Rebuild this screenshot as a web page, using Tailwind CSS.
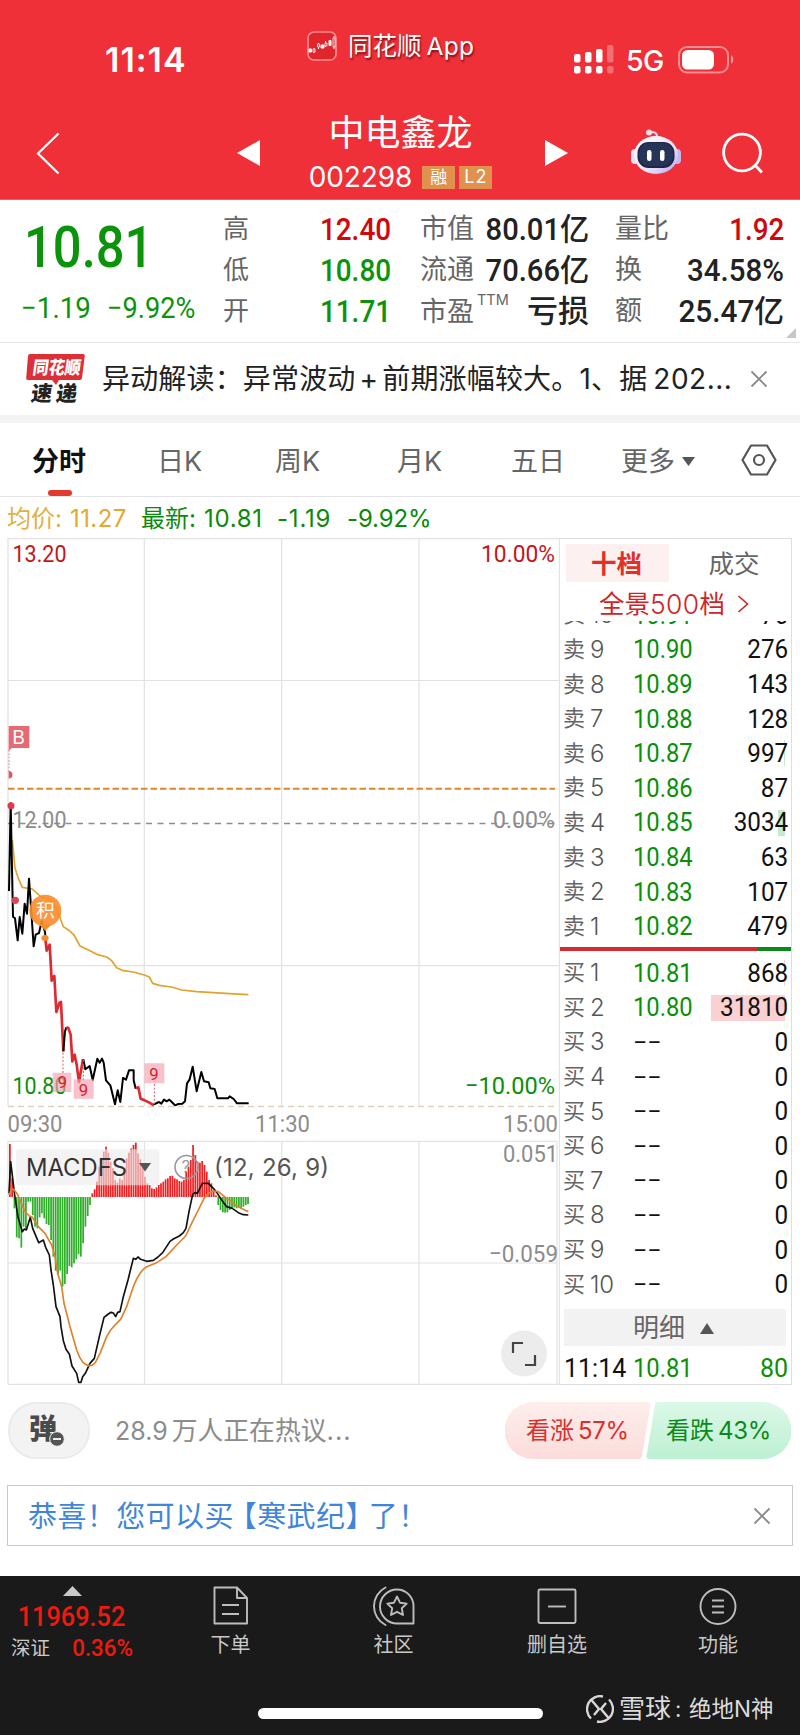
<!DOCTYPE html>
<html lang="zh-CN">
<head>
    <meta charset="UTF-8">
    <meta name="viewport" content="width=device-width, initial-scale=1.0">
    <title>中电鑫龙 002298</title>
    <script src="https://cdn.jsdelivr.net/npm/@tailwindcss/browser@4"></script>
</head>
<body class="bg-white">
<div class="w-[800px] h-[1735px] overflow-hidden flex flex-col bg-white leading-none whitespace-nowrap font-[Inter,'Noto_Sans_CJK_SC',sans-serif]">

    <!-- Header -->
    <header class="h-[200px] shrink-0 bg-[#ef3038] text-white border-b border-[#d9686c]">
        <!-- Status bar -->
        <div class="h-[100px] flex items-start">
            <div class="w-[307px] pl-[105px] pt-[43px] text-[34px] font-semibold tracking-[1px]">11:14</div>
            <div class="w-[267px] pt-[31px] flex gap-[11px]">
                <svg class="w-[30px] h-[30px]" viewBox="0 0 30 30" fill="none" stroke="#fff">
                    <rect x="1" y="1" width="28" height="28" rx="6" fill="#e0262c" stroke="#ff8f92" stroke-width="1.6"/>
                    <path d="M7 17v5M11.5 12v6M18.5 10v6M27 5v13" stroke-width="1"/>
                    <path d="M2 18h2.500v3H2zM14 14h3v3h-3zM22 9.500h2v5h-2z" fill="#fff" stroke-width="1"/>
                    <path d="M6 18h2v3H6zM10.500 13h2v3h-2zM18 12h2v3h-2zM26 7h2v9h-2z" fill="#e0262c" stroke-width=".8"/>
                </svg>
                <div class="h-[30px] flex items-center pt-px text-[24.5px] [text-shadow:1px_2px_2px_rgba(90,0,0,0.7)]">同花顺<span class="ml-[5px] tracking-[0.3px]">App</span></div>
            </div>
            <div class="pt-[45px] flex items-start">
                <svg class="w-[40px] h-[29px]" viewBox="0 0 40 29" fill="#fff">
                    <rect x="0" y="9" width="6.500" height="8.500" rx="2"/><rect x="11" y="7" width="6.500" height="10.500" rx="2"/><rect x="22" y="4" width="6.500" height="13.500" rx="2"/><rect x="33" y="0" width="6.500" height="17.500" rx="2" opacity=".3"/>
                    <rect x="0" y="21" width="6.500" height="7.500" rx="2"/><rect x="11" y="21" width="6.500" height="7.500" rx="2"/><rect x="22" y="21" width="6.500" height="7.500" rx="2"/><rect x="33" y="21" width="6.500" height="7.500" rx="2" opacity=".3"/>
                </svg>
                <div class="w-[64px] pl-[12px] pt-[2px] text-[28.5px] tracking-[-0.6px] font-medium">5G</div>
                <svg class="w-[56px] h-[29px]" viewBox="0 0 56 29">
                    <rect x="1" y="2" width="49" height="25.500" rx="8" fill="none" stroke="#fff" stroke-opacity=".45" stroke-width="2"/>
                    <rect x="4" y="5" width="32" height="19.500" rx="5.500" fill="#fff"/>
                    <path d="M53 10v9c3-2 3-7 0-9z" fill="#fff" opacity=".5"/>
                </svg>
            </div>
        </div>
        <!-- Stock title -->
        <div class="h-[99px] flex items-start">
            <svg class="mt-[32px] ml-[36px] w-[24px] h-[42px]" viewBox="0 0 24 42" fill="none" stroke="#fff" stroke-width="2.200"><path d="M22.500 1.500 2 21.500l20.500 20"/></svg>
            <svg class="mt-[40px] ml-[177px] w-[23px] h-[26px]" viewBox="0 0 23 26" fill="#fff"><path d="M0 13 23 0v26z"/></svg>
            <div class="w-[285px] flex flex-col items-center pr-[4px]">
                <div class="pt-[15px] text-[36px] h-[62px]">中电鑫龙</div>
                <div class="flex items-center h-[30px]">
                    <span class="text-[28px] tracking-[-0.1px] mr-[10px]">002298</span>
                    <span class="w-[33px] h-[23px] mr-[4px] bg-[#e0914d] text-[17px] flex items-center justify-center">融</span>
                    <span class="w-[33px] h-[23px] bg-[#e0914d] text-[18px] tracking-[1px] flex items-center justify-center">L2</span>
                </div>
            </div>
            <svg class="mt-[40px] w-[23px] h-[26px]" viewBox="0 0 23 26" fill="#fff"><path d="M23 13 0 0v26z"/></svg>
            <svg class="mt-[28px] ml-[63px] w-[50px] h-[48px]" viewBox="0 0 50 48">
                <defs><linearGradient id="robot" x1="0" y1="0" x2="1" y2="1"><stop offset="0" stop-color="#fff"/><stop offset=".6" stop-color="#e9e2fb"/><stop offset="1" stop-color="#b3a3ea"/></linearGradient></defs>
                <path d="M26 9c0-5-3-5-7-5" fill="none" stroke="#f4dff0" stroke-width="2"/><circle cx="18" cy="4.500" r="3" fill="#fbdde6"/>
                <rect x="0" y="21" width="8" height="15" rx="4" fill="#e6ddfa"/><rect x="42" y="21" width="8" height="15" rx="4" fill="#c6b7ee"/>
                <ellipse cx="25" cy="27" rx="22" ry="19" fill="url(#robot)"/>
                <rect x="6.500" y="14" width="37" height="26" rx="11" fill="#1d2748"/><rect x="8" y="15" width="34" height="23" rx="10" fill="#2b3a5e" opacity=".7"/>
                <rect x="16" y="22" width="4.500" height="11" rx="2.200" fill="#fff"/><rect x="29" y="22" width="4.500" height="11" rx="2.200" fill="#fff"/>
            </svg>
            <svg class="mt-[32px] ml-[41px] w-[42px] h-[42px]" viewBox="0 0 42 42" fill="none" stroke="#fff" stroke-width="2.800"><circle cx="20" cy="20.500" r="18.400"/><path d="m33 33 7 7.500"/></svg>
        </div>
    </header>

    <!-- Quote summary -->
    <section class="h-[143px] shrink-0 border-b border-[#e6e6e6] flex relative text-[#222] font-['Roboto','Noto_Sans_CJK_SC',sans-serif]">
        <div class="w-[223px] text-[#0b930b]">
            <div class="h-[94px] pl-[24px] pt-[19px] text-[57px] leading-[57px] font-medium"><span class="inline-block origin-left scale-x-[0.89]">10.81</span></div>
            <div class="flex pl-[21px] text-[29.5px]"><span class="w-[86px]"><span class="inline-block origin-left scale-x-[0.94]">−1.19</span></span><span class="inline-block origin-left scale-x-[0.92]">−9.92%</span></div>
        </div>
        <div class="w-[168px] pt-[8.500px] text-[31px] font-medium">
            <div class="h-[41px] flex items-center justify-between"><span class="text-[26px] font-normal text-[#666]">高</span><span class="origin-right scale-x-[0.9] text-[#d0080c]">12.40</span></div>
            <div class="h-[41px] flex items-center justify-between"><span class="text-[26px] font-normal text-[#666]">低</span><span class="origin-right scale-x-[0.9] text-[#0b930b]">10.80</span></div>
            <div class="h-[41px] flex items-center justify-between"><span class="text-[26px] font-normal text-[#666]">开</span><span class="origin-right scale-x-[0.9] text-[#0b930b]">11.71</span></div>
        </div>
        <div class="w-[169px] ml-[29px] pt-[8.500px] text-[31px] font-medium">
            <div class="h-[41px] flex items-center justify-between"><span class="text-[27px] font-normal text-[#666]">市值</span><span class="-ml-4 origin-right scale-x-[0.94]">80.01亿</span></div>
            <div class="h-[41px] flex items-center justify-between"><span class="text-[27px] font-normal text-[#666]">流通</span><span class="-ml-4 origin-right scale-x-[0.94]">70.66亿</span></div>
            <div class="h-[41px] flex items-center justify-between"><span class="pt-[3px] text-[27px] font-normal text-[#666] flex items-start">市盈<sup class="ml-[3px] -mt-[6px] top-0 text-[14.5px] leading-none font-[Inter]">TTM</sup></span><span>亏损</span></div>
        </div>
        <div class="w-[169px] ml-[26px] pt-[8.500px] text-[31px] font-medium">
            <div class="h-[41px] flex items-center justify-between"><span class="text-[27px] font-normal text-[#666]">量比</span><span class="origin-right scale-x-[0.9] text-[#d0080c]">1.92</span></div>
            <div class="h-[41px] flex items-center justify-between"><span class="text-[27px] font-normal text-[#666]">换</span><span class="origin-right scale-x-[0.95]">34.58%</span></div>
            <div class="h-[41px] flex items-center justify-between"><span class="text-[27px] font-normal text-[#666]">额</span><span class="origin-right scale-x-[0.96]">25.47亿</span></div>
        </div>
        <svg class="absolute right-[4px] bottom-[4px] w-[10px] h-[10px]" viewBox="0 0 10 10" fill="#c6c6c6"><path d="M10 0v10H0z"/></svg>
    </section>

    <!-- News line -->
    <section class="h-[72px] shrink-0 flex items-center text-[28px] text-[#222]">
        <svg class="ml-[25px] w-[62px] h-[52px]" viewBox="0 0 62 52">
            <path d="M5 1h53q2 0 1.800 2L57 25q-.3 2-2 2H34l-3 5-4-5H3q-2 0-1.800-2L3 3q.2-2 2-2z" fill="#dc3038"/>
            <g font-family="Noto Sans CJK SC" font-weight="900" transform="skewX(-8)"><text x="10" y="21.500" font-size="18" textLength="48" lengthAdjust="spacingAndGlyphs" fill="#fff">同花顺</text><text x="12" y="48.500" font-size="21" textLength="46" fill="#222">速递</text></g>
        </svg>
        <div class="ml-[15px] w-[648px] tracking-[0.17px]">异动解读：异常波动<span class="mx-[4px]">+</span>前期涨幅较大。1、据<span class="ml-[6px] tracking-[0.5px]">202...</span></div>
        <svg class="w-[18px] h-[18px]" viewBox="0 0 18 18" stroke="#8a8a8a" stroke-width="1.800"><path d="m1.500 1.500 15 15M16.500 1.500l-15 15"/></svg>
    </section>
    <div class="h-[8px] shrink-0 bg-[#f4f4f4]"></div>

    <!-- Period tabs -->
    <nav class="h-[74px] shrink-0 border-b border-[#e4e4e8] flex items-center text-[27px] text-[#666]">
        <div class="w-[125px] ml-[32px] h-full flex flex-col"><span class="h-[67px] flex items-center pt-[10px] font-bold text-[#111]">分时</span><span class="w-[24px] h-[6px] ml-[16px] rounded-[3px] bg-[#e23a2e]"></span></div>
        <div class="w-[118px] pt-[3px]">日K</div>
        <div class="w-[122px] pt-[3px]">周K</div>
        <div class="w-[114px] pt-[3px]">月K</div>
        <div class="w-[110px] pt-[3px]">五日</div>
        <div class="w-[120px] pt-[3px] flex items-center">更多<svg class="ml-[7px] w-[13px] h-[9px]" viewBox="0 0 13 9" fill="#555"><path d="M0 0h13L6.500 9z"/></svg></div>
        <svg class="w-[36px] h-[32px]" viewBox="0 0 36 32" fill="none" stroke="#555" stroke-width="2.200"><path d="M10 1.500h16L34.500 16 26 30.500H10L1.500 16z" stroke-linejoin="round"/><circle cx="18" cy="16" r="5"/></svg>
    </nav>

    <!-- Averages -->
    <div class="h-[41px] shrink-0 pl-[7px] pt-[3px] flex items-center text-[24px] text-[#0a8a0a]">
        <span class="w-[63px] text-[#e3b040]">均价:</span><span class="w-[71px] text-[#e3a92f] tracking-[0.4px]">11.27</span>
        <span class="w-[63px]">最新:</span><span class="w-[73px] tracking-[0.7px]">10.81</span><span class="w-[70px] tracking-[0.8px]">-1.19</span><span class="tracking-[-0.1px]">-9.92%</span>
    </div>

    <div class="h-[847px] shrink-0 flex">
        <!-- Time-share chart and MACD -->
        <svg class="w-[560px] h-[847px] shrink-0" viewBox="0 538 560 847" font-family="Roboto" font-size="24.500">
            <g fill="none" stroke="#e2e2e2" stroke-width="1.200">
                <path d="M8 538.700H560M8 680.500H559M8 965.700H559M8 538v568M144.300 538v568M281.600 538v568M419 538v568M559.500 538v847"/>
                <path d="M8 1141.300H557M8 1263H557M8 1384.300H560M8 1141v243M144.500 1141v243M281.700 1141v243M419 1141v243M557 1141v243"/>
            </g>
            <path d="M8 1106.500H557" stroke="#dfd3bb" stroke-width="1.500" stroke-dasharray="6 4"/>
            <path d="M8 788.700H555" stroke="#e0872c" stroke-width="2" stroke-dasharray="6.500 3"/>
            <path d="M8 823.500H555" stroke="#8c8c8c" stroke-width="1.300" stroke-dasharray="6 5.500"/>

            <g fill="#c4161c">
                <text x="12.500" y="562" textLength="54" lengthAdjust="spacingAndGlyphs">13.20</text>
                <text x="481" y="562" textLength="74" lengthAdjust="spacingAndGlyphs">10.00%</text>
            </g>
            <g fill="#8c8c8c">
                <text x="12.500" y="827.500" textLength="54" lengthAdjust="spacingAndGlyphs">12.00</text>
                <text x="493" y="827.500" textLength="62" lengthAdjust="spacingAndGlyphs">0.00%</text>
                <text x="7.500" y="1132" textLength="55" lengthAdjust="spacingAndGlyphs">09:30</text>
                <text x="255" y="1132" textLength="55" lengthAdjust="spacingAndGlyphs">11:30</text>
                <text x="503" y="1132" textLength="55" lengthAdjust="spacingAndGlyphs">15:00</text>
            </g>
            <g fill="#0a8f0a">
                <text x="12.500" y="1093.500" textLength="54" lengthAdjust="spacingAndGlyphs">10.80</text>
                <text x="465" y="1093.500" textLength="90" lengthAdjust="spacingAndGlyphs">−10.00%</text>
            </g>

            <!-- Price curves -->
            <g transform="translate(0 700) scale(.33333)" fill="none" stroke-linejoin="round">
                <path d="M37 420 45 505 55 535 67 562 97 567 120 588 150 600 172 630 190 680 205 690 222 705 240 738 270 752 290 763 320 771 335 782 350 803 370 812 400 816 433 825 448 831 458 850 478 856 515 861 545 870 590 875 640 878 690 881 745 884" stroke="#e0a32c" stroke-width="5"/>
                <path d="M27 573L32 310l7 340 6 5 8 66 6-70 8 50 7-90 7 30 6-105 6 85 8 118 6-35 10-5 8-35 10 32 4 42" stroke="#000" stroke-width="6"/>
                <path d="M136 716l4 36 9-18 6 108 8-14 6 108 9-27 5-3 7 148" stroke="#dc2a30" stroke-width="8"/>
                <path d="M190 1054l5-60 4-12" stroke="#000" stroke-width="6"/>
                <path d="M199 982l6 2 7 20 5 80 7-20 6 30 7 52 12-68" stroke="#dc2a30" stroke-width="8"/>
                <path d="M250 1078l6 30 13-10 9 42 14-64 7 12 7-12 5 12 7 53 13 15 14 57 8-42 8 35 8-72 9 5 9-28h14v30l6 25" stroke="#000" stroke-width="6"/>
                <path d="M408 1165l7-3 7 34 12 5 14 7 14 8" stroke="#dc2a30" stroke-width="8"/>
                <path d="M462 1213l15-7 7 5 8-12 8 5 8-5 8 8 9 9 10-4 12-1 8-7 6-54 8-12 9-38 12 74 14-58 8 28 14 3 5 18 13 2 8 28h32l5-6 12 8 10 13h35" stroke="#000" stroke-width="6"/>
                <path d="M27 150v72M32 320v-10" stroke="#e77c84" stroke-width="3" stroke-dasharray="5 5"/>
                <path d="M189 1058v62M463 1152v60M250 1080v65" stroke="#dc5a60" stroke-width="3" stroke-dasharray="6 5"/>
                <g stroke="none">
                    <path d="M26 213a11 11 0 0 1 0 23z" fill="#e0566a"/><circle cx="33" cy="317" r="10.500" fill="#dc3c50"/><circle cx="46" cy="601" r="11" fill="#d84858"/>
                    <path d="M26 78h62v66H36l-10 8z" fill="#e56a74"/>
                    <text x="37" y="132" font-family="Inter" font-size="58" fill="#fff">B</text>
                    <circle cx="136" cy="632" r="48" fill="#fb8c2c" fill-opacity=".9"/><path d="M118 673l18 20 18-20z" fill="#fb8c2c"/>
                    <ellipse cx="135" cy="714" rx="11" ry="9" fill="#fb8c2c"/>
                    <text x="108" y="652" font-family="Noto Sans CJK SC" font-size="56" fill="#fff">积</text>
                    <g fill="#f4a0b0" fill-opacity=".65"><path d="M158 1118h56v58h-56zM221 1138h60v58h-60zM433 1090h60v60h-60z"/></g>
                    <g fill="#d6202c" font-family="Roboto" font-size="50"><text x="173" y="1164">9</text><text x="236" y="1187">9</text><text x="448" y="1139">9</text></g>
                </g>
            </g>

            <!-- MACD -->
            <g transform="translate(0 1130) scale(.33333)" fill="none" stroke-linejoin="round">
                <g id="macdBars"></g>
                <rect x="48" y="58" width="430" height="108" rx="8" fill="#ececec" fill-opacity=".62"/>
                <path d="M27 190 32 95 44 195 54 262 67 305 73 297 79 300 91 262 98 295 116 338 130 330 137 352 148 375 153 420 160 465 168 530 180 560 183 590 190 632 198 658 208 672 216 708 230 730 236 757 243 757 248 740 256 730 270 700 283 685 298 620 312 562 325 552 333 547 340 549 347 560 353 547 360 545 370 500 384 450 400 385 407 388 414 381 422 388 440 394 460 391 474 381 488 368 510 334 520 327 538 318 550 308 558 295 567 245 578 193 585 188 592 190 598 178 607 160 625 160 640 175 652 190 665 210 680 230 697 235 715 248 730 254 745 255" stroke="#111" stroke-width="5"/>
                <path d="M27 195 33 181 40 177 52 192 75 245 88 258 97 262 115 290 135 310 155 345 165 380 172 425 185 470 192 520 210 590 230 660 238 680 247 695 256 703 266 707 276 706 286 698 300 670 320 620 332 600 345 585 362 568 380 530 400 470 410 447 420 430 430 418 440 410 470 398 498 380 530 345 557 318 575 280 595 240 612 205 625 190 640 183 655 185 680 205 710 228 745 245" stroke="#e0812c" stroke-width="5"/>
            </g>
            <g font-family="Inter" font-size="24">
                <text x="26" y="1175.500" textLength="101" lengthAdjust="spacingAndGlyphs" fill="#333">MACDFS</text>
                <path d="M139 1163h12l-6 8.500z" fill="#555"/>
                <circle cx="186.500" cy="1167" r="11.500" fill="none" stroke="#999" stroke-width="1.600"/>
                <text x="181.500" y="1173" font-size="17" fill="#999">?</text>
                <text x="214" y="1175.500" textLength="115" fill="#555">(12, 26, 9)</text>
            </g>
            <g fill="#8c8c8c">
                <text x="503" y="1161.500" textLength="55" lengthAdjust="spacingAndGlyphs">0.051</text>
                <text x="489" y="1261.500" textLength="69" lengthAdjust="spacingAndGlyphs">−0.059</text>
            </g>
            <circle cx="524" cy="1353.500" r="23" fill="#ececec"/>
            <path d="M523 1343h-10v10M535 1355v10h-10" fill="none" stroke="#444" stroke-width="2.200"/>
        </svg>

        <!-- Order book -->
        <div class="w-[232px] shrink-0 border-t border-r border-b border-[#dedede] flex flex-col font-['Roboto','Noto_Sans_CJK_SC',sans-serif]">
            <div class="h-[45px] flex pt-[5px] pl-[6px] text-[25.5px] font-[Inter,'Noto_Sans_CJK_SC',sans-serif]">
                <div class="w-[103px] h-[38px] flex items-center justify-center pt-[2px] pr-[2px] bg-[#fdf0f0] text-[#e03028] font-bold">十档</div>
                <div class="w-[122px] h-[38px] flex items-center justify-center pt-[2px] pl-[8px] text-[#666]">成交</div>
            </div>
            <div class="h-[37px] pl-[39px] pt-[3px] flex items-center text-[25.5px] text-[#d02428] font-[Inter,'Noto_Sans_CJK_SC',sans-serif]">全景<span class="text-[26.5px] tracking-[0.3px] font-light">500</span>档
                <svg class="ml-[12px] w-[12px] h-[18px]" viewBox="0 0 12 18" fill="none" stroke="#d02428" stroke-width="1.600"><path d="m1.500 1 9 8-9 8"/></svg>
            </div>
            <div class="h-[326px] overflow-hidden flex flex-col justify-end pb-[3px]" id="asks"></div>
            <div class="h-[4px] flex"><span class="w-[198px] bg-[#d22a2f]"></span><span class="grow bg-[#0a8a1a]"></span></div>
            <div class="h-[358px] pt-[5px]" id="bids"></div>
            <div class="h-[37px] ml-[4px] mr-[5px] bg-[#f2f2f2] flex items-center pl-[69px] pt-px text-[26px] text-[#666]">明细<svg class="ml-[15px] w-[14px] h-[11px]" viewBox="0 0 14 11" fill="#555"><path d="M7 0l7 11H0z"/></svg></div>
            <div class="grow flex items-center pl-[4px] pr-[3px] pt-[6px] text-[25px] text-[#0a8f0a]"><span class="w-[69px] text-[#111]">11:14</span><span class="grow"><span class="inline-block origin-left scale-x-[0.95]">10.81</span></span><span>80</span></div>
        </div>
    </div>

    <!-- Discussion -->
    <section class="h-[57px] shrink-0 mt-[17px] mx-[8px] flex items-center">
        <div class="w-[82px] h-[57px] rounded-[28px] bg-[#f3f3f3] border-2 border-[#ebebeb] relative flex items-center pl-[19px]">
            <span class="text-[28px] font-black text-[#4a4a4a] pb-[4px]">弹</span>
            <svg class="absolute left-[39px] top-[27px] w-[16px] h-[16px]" viewBox="0 0 16 16"><circle cx="8" cy="8" r="7.300" fill="#555" stroke="#f3f3f3"/><path d="M4 8h8" stroke="#fff" stroke-width="1.800"/></svg>
        </div>
        <div class="ml-[25px] w-[390px] pt-px text-[25.8px] text-[#8c8c8c]"><span class="mr-[4px] text-[25px]">28.9</span>万人正在热议<span class="tracking-[1px]">...</span></div>
        <div class="relative w-[286px] h-[57px] text-[24px]">
            <svg class="absolute inset-0 w-[286px] h-[57px]" viewBox="0 0 286 57">
                <defs>
                    <linearGradient id="up" x2="0" y2="1"><stop offset="0" stop-color="#fdeeec"/><stop offset="1" stop-color="#fbdcda"/></linearGradient>
                    <linearGradient id="down" x2="0" y2="1"><stop offset="0" stop-color="#dcf8e8"/><stop offset="1" stop-color="#bdf0d2"/></linearGradient>
                </defs>
                <path d="M28 0H143q3 0 2.500 3L137 54q-.5 3-3 3H28a28 28 0 0 1 0-57z" fill="url(#up)"/>
                <path d="M153 0H258a28 28 0 0 1 0 57H144q-3 0-2.500-3L150 3q.5-3 3-3z" fill="url(#down)"/>
            </svg>
            <div class="relative h-full flex items-center pl-[21px]"><span class="w-[140px] text-[#d8302e]">看涨<span class="ml-[4px] tracking-[-0.3px]">57%</span></span><span class="text-[#0a8a1a]">看跌<span class="ml-[4px] tracking-[-0.3px]">43%</span></span></div>
        </div>
    </section>

    <!-- Promo -->
    <section class="h-[61px] shrink-0 mt-[26px] ml-[7px] mr-[7px] border border-[#c9c9c9] flex items-center justify-between pl-[20px] pr-[21px] text-[29px] text-[#3f86d8]">
        <span class="tracking-[0.4px] pt-px">恭喜！您可以买<span class="-ml-[6px]">【</span>寒武纪<span class="-mr-[6px]">】</span>了！</span>
        <svg class="w-[18px] h-[18px]" viewBox="0 0 18 18" stroke="#8a8a8a" stroke-width="1.800"><path d="m1.500 1.500 15 15M16.500 1.500l-15 15"/></svg>
    </section>

    <!-- Bottom bar -->
    <footer class="grow mt-[30px] bg-[#1a1a1a] text-[#c9c9c9] text-[20px] flex flex-col">
        <div class="h-[118px] flex">
            <div class="w-[144px] flex flex-col items-center pt-[10px] font-['Roboto','Noto_Sans_CJK_SC',sans-serif] text-[#f0190f]">
                <svg class="w-[19px] h-[10px]" viewBox="0 0 19 10" fill="#c9c9c9"><path d="M9.500 0 19 10H0z"/></svg>
                <span class="mt-[7px] text-[27.5px] leading-[28px] font-medium scale-x-[0.92]">11969.52</span>
                <span class="mt-[6px] w-[122px] flex items-center justify-between"><span class="text-[19.500px] text-[#c9c9c9]">深证</span><span class="text-[23.500px] font-medium origin-right scale-x-[0.95]">0.36%</span></span>
            </div>
            <div class="w-[173px] flex flex-col items-center pt-[10px]">
                <svg class="w-[36px] h-[40px]" viewBox="0 0 36 40" fill="none" stroke="#bdbdbd" stroke-width="1.900" stroke-linejoin="round"><path d="M1.500 1.500H24L34 12v25.500H1.500zM24 1.500V12h10M9 19h17M9 28h17"/></svg>
                <span class="mt-[9px]">下单</span>
            </div>
            <div class="w-[153px] flex flex-col items-center pt-[10px]">
                <svg class="w-[42px] h-[40px]" viewBox="0 0 42 40" fill="none" stroke="#bdbdbd" stroke-width="1.900" stroke-linejoin="round" stroke-linecap="round"><path d="M24 3.500a17 17 0 1 0 0 34h16.500V20A16.500 16.500 0 0 0 24 3.500zM12.500 1.500a21 21 0 0 0 0 37.500"/><path d="m24 10.500 3 6.200 6.700.9-4.900 4.700 1.200 6.700-6-3.200-6 3.200 1.200-6.700-4.900-4.700 6.700-.9z"/></svg>
                <span class="mt-[9px]">社区</span>
            </div>
            <div class="w-[174px] flex flex-col items-center pt-[10px]">
                <svg class="w-[40px] h-[40px]" viewBox="0 0 40 40" fill="none" stroke="#bdbdbd" stroke-width="1.900"><rect x="1.500" y="3.500" width="37" height="33.500" rx="1.500"/><path d="M11 20.500h18"/></svg>
                <span class="mt-[9px]">删自选</span>
            </div>
            <div class="w-[148px] flex flex-col items-center pt-[10px]">
                <svg class="w-[38px] h-[40px]" viewBox="0 0 38 40" fill="none" stroke="#bdbdbd" stroke-width="1.900"><circle cx="19" cy="20.500" r="17.500"/><path d="M13 14.500h12M13 20.500h12M13 26.500h12"/></svg>
                <span class="mt-[9px]">功能</span>
            </div>
        </div>
        <div class="flex items-start pt-[1px]">
            <div class="ml-[258px] mt-[13px] w-[285px] h-[11px] rounded-full bg-white"></div>
            <svg class="ml-[43px] w-[28px] h-[28px]" viewBox="0 0 28 28" fill="none" stroke="#d8d8d8" stroke-width="2.400"><path d="M17 1.500A13 13 0 0 0 5 23.500M11 26.500A13 13 0 0 0 23 4.500"/><path d="M5 4.500l8 9.500-5 6M23 23.500 15 14l5-6"/></svg>
            <div class="ml-[5px] h-[28px] flex items-center text-[#dcdcdc] text-[26px]">雪球<span class="text-[22px] ml-[4px] w-[14px]">:</span><span class="text-[22.500px]">绝地N神</span></div>
        </div>
    </footer>
</div>

<script>
    // [档位, 价格, 数量, 量柱宽度]
    const asks = [[10, '10.91', '76', 0], [9, '10.90', 276, 0], [8, '10.89', 143, 0], [7, '10.88', 128, 0], [6, '10.87', 997, 1], [5, '10.86', 87, 0], [4, '10.85', 3034, 7], [3, '10.84', 63, 0], [2, '10.83', 107, 0], [1, '10.82', 479, 0]];
    const bids = [[1, '10.81', 868, 1], [2, '10.80', 31810, 74]];
    for (let i = 3; i <= 10; i++) bids.push([i, '', 0, 0]);

    function bookRow(side, barClass, [level, price, volume, bar]) {
        const priceCell = price
            ? `<span class="inline-block origin-left scale-x-[0.95] text-[#0a8f0a]">${price}</span>`
            : `<span class="text-[#111]">−−</span>`;
        return `
            <div class="h-[34.6px] shrink-0 pl-[3px] pr-[3px] flex items-center relative text-[25px]">
                <span class="w-[70px] flex items-center text-[#666]"><span class="text-[22px] w-[27px]">${side}</span><span class="font-[Inter] font-light text-[#555] text-[24px] tracking-[-0.3px]">${level}</span></span>
                <span class="grow">${priceCell}</span>
                <span class="absolute right-[6px] top-[4px] h-[26px] ${barClass}" style="width:${bar}px"></span>
                <span class="relative origin-right scale-x-[0.97] text-[#111]">${volume}</span>
            </div>`;
    }
    document.getElementById('asks').innerHTML = asks.map(r => bookRow('卖', 'bg-[#c4ebcf]', r)).join('');
    document.getElementById('bids').innerHTML = bids.map(r => bookRow('买', 'bg-[#fbd0d2]', r)).join('');

    // MACD 柱
    const zero = 201;
    const bars = [42, 145, 235, 322, 325, 353, 290, 296, 215, 215, 255, 290, 295, 262, 250, 265, 282, 285, 330, 380, 422, 435, 422, 470, 462, 432, 408, 412, 400, 388, 373, 380, 340, 290, 258, 225,
        190, 178, 155, 110, 85, 65, 50, 68, 95, 115, 150, 158, 145, 150, 115, 85, 68, 55, 45, 38, 70, 88, 115, 140, 160, 165, 175, 177, 172, 165, 160, 155, 148, 145, 138, 138, 145, 148, 153, 155, 150, 125, 110, 90, 45, 75, 95, 98, 93, 105, 125, 150, 160, 180, 196,
        225, 240, 247, 248, 247, 240, 235, 232, 235, 232, 235, 230, 225, 222];
    document.getElementById('macdBars').innerHTML = bars.map((y, i) => {
        const x = 27 + i * 6.87;
        const color = y < zero ? '#f02022' : '#2fae2a';
        return `<rect x="${x.toFixed(1)}" y="${Math.min(y, zero)}" width="5.2" height="${Math.abs(zero - y)}" fill="${color}"/>`;
    }).join('');
</script>
</body>
</html>
